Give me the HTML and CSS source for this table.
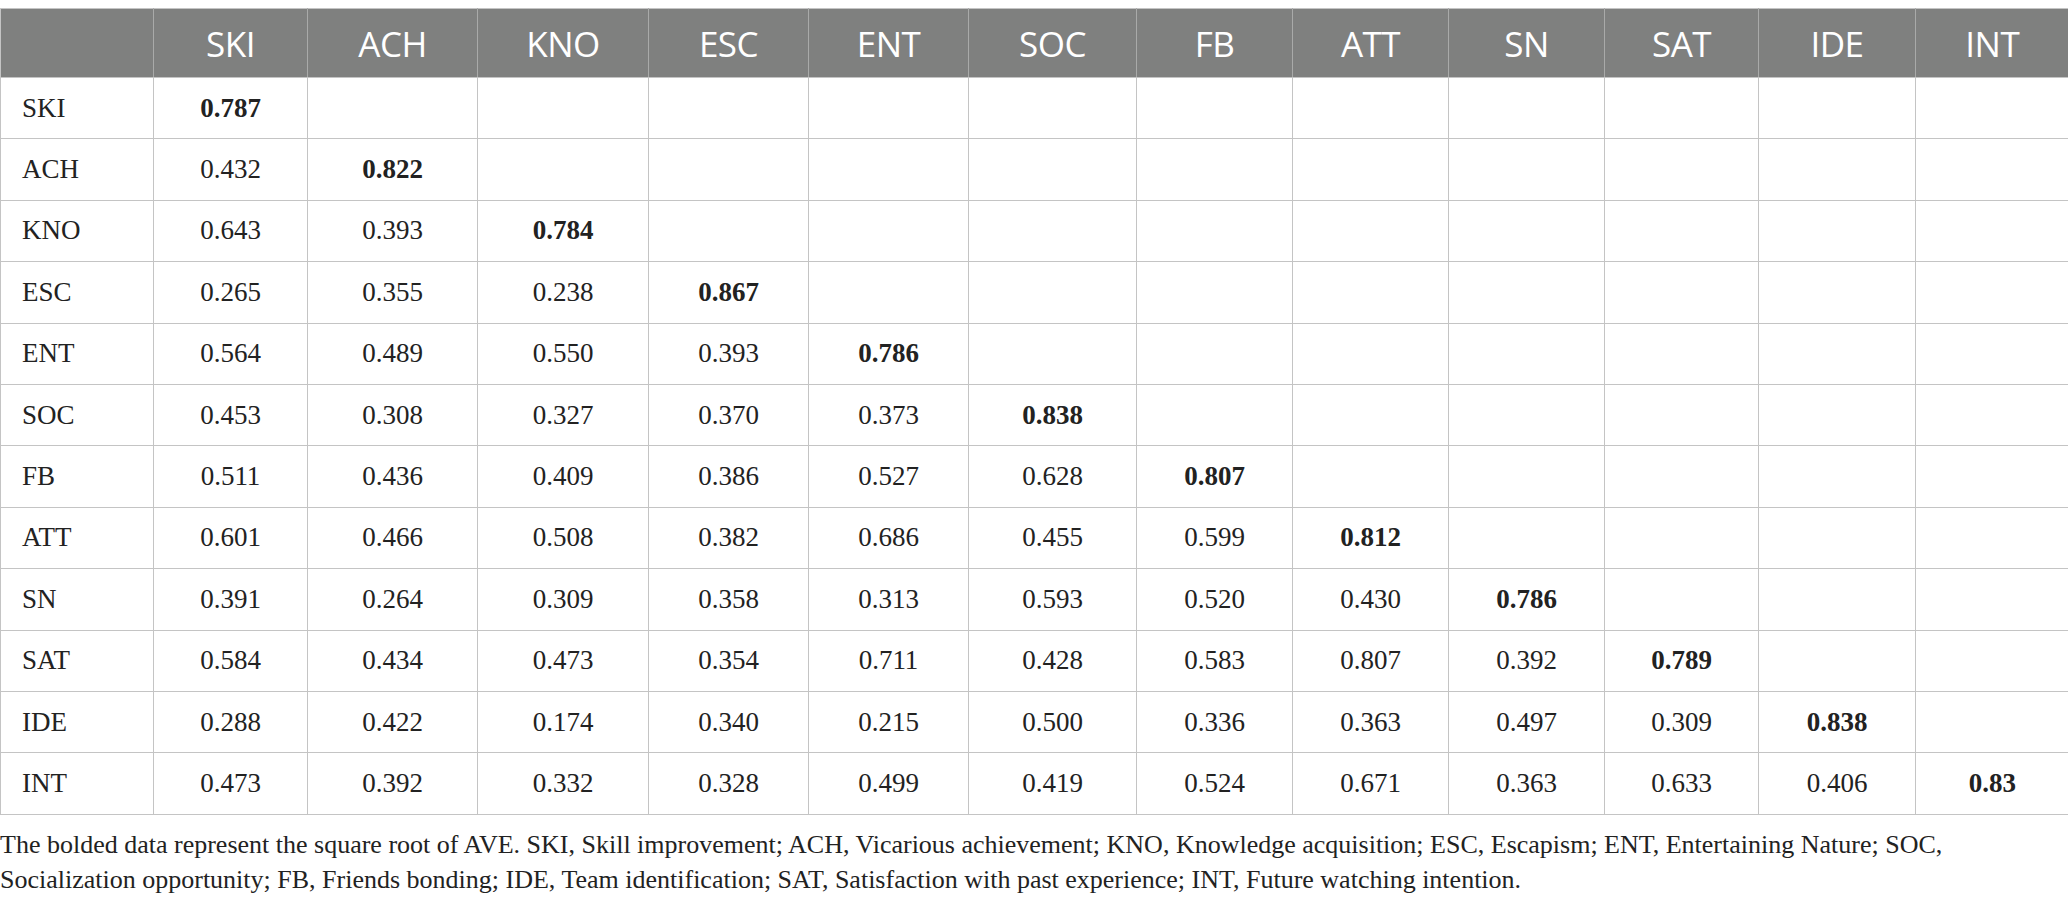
FILE: index.html
```html
<!DOCTYPE html>
<html lang="en">
<head>
    <meta charset="UTF-8">
    <title>Discriminant validity (Fornell-Larcker)</title>
    <link rel="stylesheet" href="styles.css">
</head>
<body>
    <table class="matrix">
        <colgroup>
            <col class="c-label">
            <col style="width: 154px">
            <col style="width: 170px">
            <col style="width: 171px">
            <col style="width: 160px">
            <col style="width: 160px">
            <col style="width: 168px">
            <col style="width: 156px">
            <col style="width: 156px">
            <col style="width: 156px">
            <col style="width: 154px">
            <col style="width: 157px">
            <col style="width: 153px">
        </colgroup>
        <thead>
            <tr>
                <th></th>
                <th>SKI</th>
                <th>ACH</th>
                <th>KNO</th>
                <th>ESC</th>
                <th>ENT</th>
                <th>SOC</th>
                <th>FB</th>
                <th>ATT</th>
                <th>SN</th>
                <th>SAT</th>
                <th>IDE</th>
                <th>INT</th>
            </tr>
        </thead>
        <tbody>
            <tr><td>SKI</td><td class="diag">0.787</td><td></td><td></td><td></td><td></td><td></td><td></td><td></td><td></td><td></td><td></td><td></td></tr>
            <tr><td>ACH</td><td>0.432</td><td class="diag">0.822</td><td></td><td></td><td></td><td></td><td></td><td></td><td></td><td></td><td></td><td></td></tr>
            <tr><td>KNO</td><td>0.643</td><td>0.393</td><td class="diag">0.784</td><td></td><td></td><td></td><td></td><td></td><td></td><td></td><td></td><td></td></tr>
            <tr><td>ESC</td><td>0.265</td><td>0.355</td><td>0.238</td><td class="diag">0.867</td><td></td><td></td><td></td><td></td><td></td><td></td><td></td><td></td></tr>
            <tr><td>ENT</td><td>0.564</td><td>0.489</td><td>0.550</td><td>0.393</td><td class="diag">0.786</td><td></td><td></td><td></td><td></td><td></td><td></td><td></td></tr>
            <tr><td>SOC</td><td>0.453</td><td>0.308</td><td>0.327</td><td>0.370</td><td>0.373</td><td class="diag">0.838</td><td></td><td></td><td></td><td></td><td></td><td></td></tr>
            <tr><td>FB</td><td>0.511</td><td>0.436</td><td>0.409</td><td>0.386</td><td>0.527</td><td>0.628</td><td class="diag">0.807</td><td></td><td></td><td></td><td></td><td></td></tr>
            <tr><td>ATT</td><td>0.601</td><td>0.466</td><td>0.508</td><td>0.382</td><td>0.686</td><td>0.455</td><td>0.599</td><td class="diag">0.812</td><td></td><td></td><td></td><td></td></tr>
            <tr><td>SN</td><td>0.391</td><td>0.264</td><td>0.309</td><td>0.358</td><td>0.313</td><td>0.593</td><td>0.520</td><td>0.430</td><td class="diag">0.786</td><td></td><td></td><td></td></tr>
            <tr><td>SAT</td><td>0.584</td><td>0.434</td><td>0.473</td><td>0.354</td><td>0.711</td><td>0.428</td><td>0.583</td><td>0.807</td><td>0.392</td><td class="diag">0.789</td><td></td><td></td></tr>
            <tr><td>IDE</td><td>0.288</td><td>0.422</td><td>0.174</td><td>0.340</td><td>0.215</td><td>0.500</td><td>0.336</td><td>0.363</td><td>0.497</td><td>0.309</td><td class="diag">0.838</td><td></td></tr>
            <tr><td>INT</td><td>0.473</td><td>0.392</td><td>0.332</td><td>0.328</td><td>0.499</td><td>0.419</td><td>0.524</td><td>0.671</td><td>0.363</td><td>0.633</td><td>0.406</td><td class="diag">0.83</td></tr>
        </tbody>
    </table>

    <p class="note">The bolded data represent the square root of AVE. SKI, Skill improvement; ACH, Vicarious achievement; KNO, Knowledge acquisition; ESC, Escapism; ENT, Entertaining Nature; SOC, Socialization opportunity; FB, Friends bonding; IDE, Team identification; SAT, Satisfaction with past experience; INT, Future watching intention.</p>
</body>
</html>
```

FILE: styles.css
```css
body {
    margin: 0;
    padding-top: 8px;
    background-color: #fff;
    color: #222;
    font-family: 'Liberation Serif', 'Times New Roman', serif;
}
.matrix {
    width: 2068px;
    border-collapse: collapse;
    table-layout: fixed;
    border-top: 1px solid #c4c4c4;
}
.c-label {
    width: 153px;
}
.matrix th {
    height: 68px;
    padding: 0;
    background-color: #7f807f;
    color: #fff;
    font-family: 'Open Sans', 'Liberation Sans', sans-serif;
    font-size: 35px;
    font-weight: 400;
    letter-spacing: -0.5px;
    text-align: center;
    border-left: 1px solid #a9aaa9;
    border-bottom: 1px solid #c4c4c4;
}
.matrix th:first-child {
    border-left: 1px solid #c4c4c4;
}
.matrix td {
    height: 60.4px;
    padding: 0;
    font-size: 27px;
    text-align: center;
    border: 1px solid #c4c4c4;
}
.matrix td:first-child {
    text-align: left;
    padding-left: 21px;
}
.matrix td:last-child,
.matrix th:last-child {
    border-right: none;
}
.diag {
    font-weight: bold;
}
.note {
    margin: 12px 0 0;
    font-size: 26px;
    line-height: 35px;
    color: #222;
}
```
